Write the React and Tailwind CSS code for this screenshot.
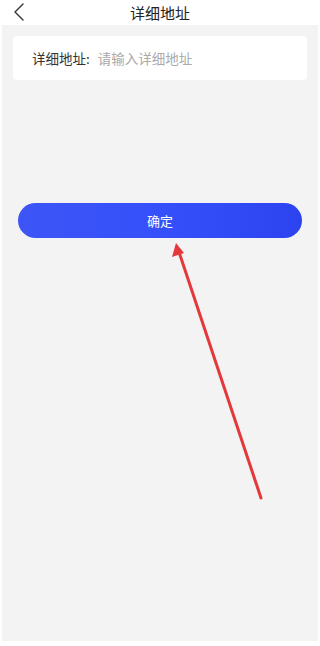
export default function App() {
  return (
    <div
      className="relative flex h-[646px] w-[320px] flex-col bg-white px-[2px] pb-[5px]"
      style={{ fontFamily: '"Noto Sans CJK SC", "Noto Sans", sans-serif' }}
    >
      <header className="relative flex h-[25px] shrink-0 items-center justify-center">
        <svg
          className="absolute left-[11px] top-[3px]"
          width="12"
          height="18"
          viewBox="0 0 12 18"
          fill="none"
        >
          <path d="M10 1 L2 9 L10 17" stroke="#333" strokeWidth="1.4" strokeLinecap="round" strokeLinejoin="round" />
        </svg>
        <h1 className="text-[15px] leading-none text-[#222]">详细地址</h1>
      </header>

      <main className="flex flex-1 flex-col bg-[#f3f3f3] px-[11px] pt-[11px]">
        <div className="flex h-[44px] items-center rounded-[4px] bg-white px-[19px] text-[13.5px]">
          <span className="text-[#333]">详细地址:</span>
          <span className="ml-[8px] text-[#aaa]">请输入详细地址</span>
        </div>

        <button className="mx-[5px] mt-[123px] flex h-[35px] items-center justify-center rounded-full bg-gradient-to-r from-[#3d55f6] via-[#3550fb] to-[#2c44ef] text-[13px] text-white">
          确定
        </button>
      </main>

      <svg
        className="pointer-events-none absolute left-0 top-0"
        width="320"
        height="646"
        viewBox="0 0 320 646"
      >
        <line x1="261" y1="498" x2="179" y2="252" stroke="#e5383b" strokeWidth="3" strokeLinecap="round" />
        <polygon points="176,243 172,257 184,253" fill="#e5383b" />
      </svg>
    </div>
  );
}
